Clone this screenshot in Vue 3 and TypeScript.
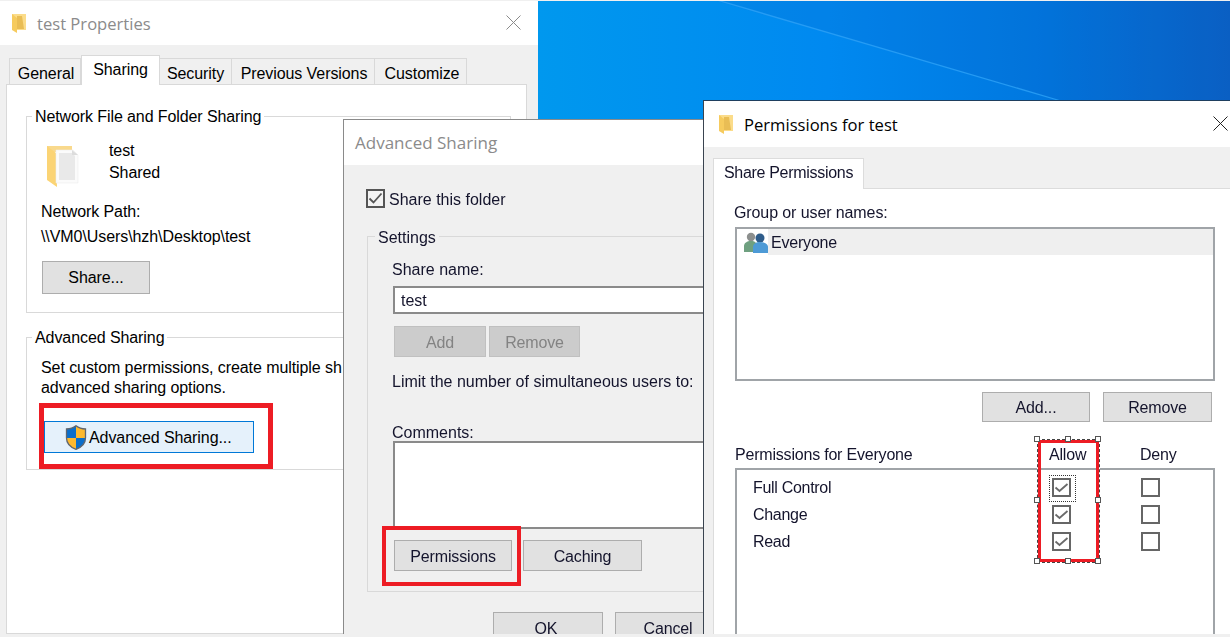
<script setup lang="ts">
interface PermRow { name: string; allow: boolean; focus: boolean }
const rows: PermRow[] = [
  { name: 'Full Control', allow: true, focus: true },
  { name: 'Change', allow: true, focus: false },
  { name: 'Read', allow: true, focus: false },
]
const tabs: string[] = ['General', 'Sharing', 'Security', 'Previous Versions', 'Customize']
const handles: { left: string; top: string }[] = [
  { left: '0%', top: '0%' }, { left: '50%', top: '0%' }, { left: '100%', top: '0%' },
  { left: '0%', top: '50%' }, { left: '100%', top: '50%' },
  { left: '0%', top: '100%' }, { left: '50%', top: '100%' }, { left: '100%', top: '100%' },
]
</script>

<template>
  <div class="screen">
    <svg class="wallpaper" viewBox="0 0 692 118" preserveAspectRatio="none">
      <defs>
        <linearGradient id="wall" x1="0" y1="0" x2="1" y2="0">
          <stop offset="0" stop-color="#0098ee" />
          <stop offset="0.42" stop-color="#0089f0" />
          <stop offset="0.72" stop-color="#0078e0" />
          <stop offset="1" stop-color="#0a60c4" />
        </linearGradient>
      </defs>
      <rect width="692" height="118" fill="url(#wall)" />
      <polygon points="179,0 523,100 692,100 692,0" fill="#0a5cc0" opacity="0.16" />
      <line x1="179" y1="-1" x2="523" y2="100" stroke="#2ea3f8" stroke-width="1.3" opacity="0.8" />
    </svg>

    <section class="win props">
      <header class="title">
        <svg class="mini" viewBox="0 0 14 19">
          <rect x="0" y="0" width="14" height="16" fill="#fbdc8a" />
          <polygon points="0,0 5,4 5,19 0,16" fill="#f6cb5e" />
          <polygon points="5,2 10,2 12,15 5,15" fill="#e9bd55" />
        </svg>
        <span class="title-text dim">test Properties</span>
        <svg class="close" viewBox="0 0 15 15"><path d="M0.5 0.5 14.5 14.5M14.5 0.5 0.5 14.5" stroke="#8a8a8a" fill="none" /></svg>
      </header>
      <nav class="tabs">
        <span v-for="t in tabs" :key="t" class="tab" :class="['tab-' + t.split(' ')[0], { active: t === 'Sharing' }]">{{ t }}</span>
      </nav>
      <div class="panel">
        <div class="group g1">
          <span class="legend">Network File and Folder Sharing</span>
          <div class="share-row">
            <svg class="big-folder" viewBox="0 0 36 44">
              <polygon points="1,2 26,2 26,8 1,8" fill="#f9d98c" />
              <polygon points="1,2 10,9 11,43 1,36" fill="#fbd475" />
              <polygon points="10,6 27,6 32,11 32,39 10,39" fill="#fbfbfb" stroke="#ececec" stroke-width="0.6" />
              <polygon points="13,9 26,9 29,12 29,36 13,36" fill="#e9e9e9" />
              <polygon points="26,6 32,11 26,11" fill="#dcdcdc" />
            </svg>
            <div class="share-text"><div>test</div><div>Shared</div></div>
          </div>
          <div class="net-label">Network Path:</div>
          <div class="net-path">\\VM0\Users\hzh\Desktop\test</div>
          <button class="btn share-btn">Share...</button>
        </div>
        <div class="group g2">
          <span class="legend">Advanced Sharing</span>
          <div class="adv-text">Set custom permissions, create multiple sh</div>
          <div class="adv-text">advanced sharing options.</div>
          <button class="btn adv-btn">
            <svg class="shield" viewBox="0 0 22 25">
              <defs><clipPath id="sh"><path d="M11 .8C8.5 2.8 4.8 4 1.5 4v9c0 5.8 4.3 9.400 9.500 11.300 5.200-1.900 9.500-5.500 9.500-11.300V4C17.200 4 13.500 2.800 11 .8z" /></clipPath></defs>
              <g clip-path="url(#sh)">
                <rect x="0" y="0" width="11" height="13" fill="#0a6ecb" />
                <rect x="11" y="0" width="11" height="13" fill="#fdb92e" />
                <rect x="0" y="13" width="11" height="12" fill="#fdb92e" />
                <rect x="11" y="13" width="11" height="12" fill="#0a6ecb" />
              </g>
              <path d="M11 .8C8.500 2.800 4.800 4 1.500 4v9c0 5.800 4.300 9.400 9.500 11.300 5.200-1.900 9.500-5.500 9.500-11.300V4C17.200 4 13.500 2.800 11 .8z" fill="none" stroke="#5f6670" stroke-width="1.300" />
            </svg>
            <span class="adv-label">Advanced Sharing...</span>
          </button>
        </div>
      </div>
      <div class="red red-adv"></div>
    </section>

    <section class="win adv">
      <header class="title short"><span class="title-text dim big">Advanced Sharing</span></header>
      <div class="soft adv-body">
        <label class="check-row">
          <span class="cb dark"><svg viewBox="0 0 19 19"><path d="M3.500 9.500l4 4 8-9" fill="none" stroke="#555" stroke-width="1.800" /></svg></span>
          <span class="check-label">Share this folder</span>
        </label>
        <div class="group settings">
          <span class="legend gray">Settings</span>
          <div class="line s-name">Share name:</div>
          <div class="input">test</div>
          <div class="btn-row small">
            <button class="btn off w92">Add</button>
            <button class="btn off w91">Remove</button>
          </div>
          <div class="line s-limit">Limit the number of simultaneous users to:</div>
          <div class="line s-comments">Comments:</div>
          <div class="textarea"></div>
          <div class="btn-row wide">
            <button class="btn w118">Permissions</button>
            <button class="btn w119">Caching</button>
          </div>
        </div>
        <div class="btn-row footer">
          <button class="btn w110">OK</button>
          <button class="btn w110">Cancel</button>
        </div>
      </div>
      <div class="red red-perm"></div>
    </section>

    <section class="win perm">
      <header class="title perm-title">
        <svg class="mini" viewBox="0 0 14 19">
          <rect x="0" y="0" width="14" height="16" fill="#fbdc8a" />
          <polygon points="0,0 5,4 5,19 0,16" fill="#f6cb5e" />
          <polygon points="5,2 10,2 12,15 5,15" fill="#e9bd55" />
        </svg>
        <span class="title-text">Permissions for test</span>
        <svg class="close" viewBox="0 0 15 15"><path d="M0.5 0.5 14.5 14.5M14.5 0.5 0.5 14.5" stroke="#222" fill="none" /></svg>
      </header>
      <div class="soft">
        <div class="perm-tabs"><span class="perm-tab">Share Permissions</span></div>
        <div class="perm-panel">
          <div class="line p-group">Group or user names:</div>
          <div class="listbox">
            <div class="list-row">
              <span class="list-icon">
                <svg viewBox="0 0 24 21" width="24" height="21">
                  <circle cx="7" cy="5" r="4.200" fill="#8c8f8e" />
                  <path d="M0 20V14c0-3 3-5 7-5s6 2 6 5v6z" fill="#6fa080" />
                  <circle cx="16" cy="6" r="4.500" fill="#2e5c8a" />
                  <path d="M9 21v-6c0-3 3-5 7-5s8 2 8 5v6z" fill="#4d9ad6" />
                </svg>
              </span>
              <span class="list-name">Everyone</span>
            </div>
          </div>
          <div class="btn-row list-btns">
            <button class="btn w108">Add...</button>
            <button class="btn w109">Remove</button>
          </div>
          <div class="perm-head">
            <span class="ph-name">Permissions for Everyone</span>
            <span class="ph-allow">Allow</span>
            <span>Deny</span>
          </div>
          <div class="perm-box">
            <div v-for="r in rows" :key="r.name" class="perm-row">
              <span class="perm-name">{{ r.name }}</span>
              <span class="cb" :class="{ focus: r.focus }">
                <svg v-if="r.allow" viewBox="0 0 19 19"><path d="M3.500 9.500l4 3.500 8-7" fill="none" stroke="#6a6a6a" stroke-width="1.800" /></svg>
              </span>
              <span class="cb"></span>
            </div>
          </div>
        </div>
      </div>
      <div class="selection">
        <div class="sel-red"></div>
        <i v-for="(h, i) in handles" :key="i" class="handle" :style="{ left: h.left, top: h.top }"></i>
      </div>
    </section>
  </div>
</template>

<style>
html, body { margin: 0; background: #f0f0f0; }
</style>

<style scoped>
.screen {
  position: relative;
  width: 1230px;
  height: 637px;
  overflow: hidden;
  background: #f0f0f0;
  font-family: "Liberation Sans", Arial, sans-serif;
  font-size: 16px;
  color: #000;
}
.wallpaper { position: absolute; left: 538px; top: 1px; width: 692px; height: 118px; display: block; }
.win { position: absolute; overflow: hidden; background: #f0f0f0; box-sizing: border-box; }
.props { left: 0; top: 1px; width: 538px; height: 633px; letter-spacing: -0.08px; }
.adv { left: 343px; top: 119px; width: 361px; height: 515px; border-left: 1px solid #8a8a8a; border-top: 1px solid #8a8a8a; }
.perm { left: 703px; top: 100px; width: 527px; height: 534px; border-left: 1px solid #3a4450; border-top: 1px solid #1f3f5f; }

.title { display: flex; align-items: center; height: 44px; background: #fff; padding-left: 12px; position: relative; }
.title.short { height: 45px; padding-left: 11px; }
.perm-title { height: 46px; padding-left: 15px; }
.mini { width: 14px; height: 19px; flex: none; margin-right: 11px; }
.title-text { font-family: "Open Sans", sans-serif; font-size: 16.6px; letter-spacing: 0; }
.title-text.big { font-size: 17px; }
.dim { color: #8b8b8b; }
.close { position: absolute; right: 17px; top: 14px; width: 15px; height: 15px; }
.perm-title .close { right: 2px; top: 15px; }

.tabs { display: flex; align-items: flex-end; height: 29px; margin-top: 10px; padding-left: 9px; color: #000; }
.tab { box-sizing: border-box; height: 26px; border: 1px solid #d9d9d9; border-bottom: none; border-left-width: 0; line-height: 30px; text-align: center; background: #f0f0f0; white-space: nowrap; }
.tab-General { width: 72px; border-left-width: 1px; padding-left: 2px; }
.tab-Sharing { width: 79px; }
.tab-Security { width: 72px; }
.tab-Previous { width: 143px; padding-left: 2px; }
.tab-Customize { width: 92px; padding-left: 3px; }
.tab.active { height: 30px; background: #fff; line-height: 28px; margin-bottom: -1px; position: relative; z-index: 1; border-left-width: 1px; }

.panel { box-sizing: border-box; margin: 0 11px 0 6px; height: 550px; background: #fff; border: 1px solid #d9d9d9; padding: 31px 0 0 19px; }
.group { box-sizing: border-box; border: 1px solid #d9d9d9; }
.g1 { width: 485px; height: 197px; }
.g2 { width: 485px; height: 133px; margin-top: 24px; }
.legend { display: block; width: fit-content; margin: -10px 0 0 5px; padding: 0 3px; background: #fff; line-height: 20px; white-space: nowrap; }
.g1 .legend { letter-spacing: -0.1px; }
.legend.gray { background: #f0f0f0; margin: -9px 0 -1px 7px; }
.share-row { display: flex; margin-top: 12px; }
.big-folder { width: 36px; height: 44px; margin: 5px 0 0 19px; flex: none; }
.share-text { margin-left: 27px; padding-top: 1px; line-height: 22px; }
.net-label { margin: 13px 0 0 14px; line-height: 22px; }
.net-path { margin: 3px 0 0 14px; line-height: 22px; }
.btn { box-sizing: border-box; display: flex; align-items: center; justify-content: center; padding: 0; background: #e1e1e1; border: 1.500px solid #adadad; font: inherit; color: inherit; letter-spacing: inherit; }
.soft .btn { padding-top: 2px; letter-spacing: -0.15px; }
.share-btn { width: 108px; height: 33px; margin: 13px 0 0 15px; }
.adv-text { margin-left: 14px; line-height: 20px; white-space: nowrap; }
.legend + .adv-text { margin-top: 10px; }
.adv-btn { width: 210px; height: 32px; margin: 23px 0 0 17px; background: #e5f1fb; border: 1px solid #0078d7; justify-content: flex-start; padding-left: 20px; }
.adv-label { margin-top: 2px; }
.shield { width: 22px; height: 25px; margin-right: 2px; flex: none; }
.red { position: absolute; box-sizing: border-box; border: 5px solid #ed1c24; }
.red-adv { left: 39px; top: 402px; width: 234px; height: 66px; }
.red-perm { left: 38px; top: 406px; width: 139px; height: 60px; border-width: 4px; }

.soft { filter: blur(0.3px); color: #14142c; }
.adv-body { padding: 24px 0 0 22px; }
.check-row { display: flex; align-items: center; gap: 4px; height: 19px; }
.check-label { margin-top: 2px; }
.cb { box-sizing: border-box; display: block; width: 19px; height: 19px; background: #fff; border: 2px solid #666; position: relative; }
.cb svg { position: absolute; left: -2px; top: -2px; width: 19px; height: 19px; }
.cb.dark { border-color: #555; background: #f3f3f3; }
.settings { width: 399px; height: 356px; margin: 28px 0 0 1px; }
.line { line-height: 20px; white-space: nowrap; }
.s-name { margin: 13px 0 0 24px; }
.input { box-sizing: border-box; width: 380px; height: 28px; margin: 6px 0 0 25px; background: #fff; border: 2px solid #8a8a8a; padding-left: 6px; line-height: 26px; }
.btn-row { display: flex; }
.small { margin: 12px 0 0 26px; gap: 3px; }
.off { background: #ccc; border-color: #c0c0c0; color: #838383; }
.w92 { width: 92px; height: 31px; }
.w91 { width: 91px; height: 31px; }
.s-limit { margin: 15px 0 0 24px; }
.s-comments { margin: 31px 0 0 24px; }
.textarea { box-sizing: border-box; width: 380px; height: 88px; margin: -2px 0 0 25px; background: #fff; border: 2px solid #8a8a8a; }
.wide { margin: 11px 0 0 26px; gap: 11px; }
.w118 { width: 118px; height: 31px; }
.w119 { width: 119px; height: 31px; }
.footer { margin: 20px 0 0 127px; gap: 12px; }
.soft .w110 { width: 110px; height: 33px; flex: none; padding: 0 4px 0 0; }

.perm-tabs { height: 41px; padding: 11px 0 0 9px; box-sizing: border-box; }
.perm-tab { display: block; box-sizing: border-box; width: 151px; height: 31px; background: #fff; border: 1px solid #dcdcdc; border-bottom: none; text-align: center; line-height: 28px; position: relative; z-index: 1; letter-spacing: -0.3px; }
.perm-panel { box-sizing: border-box; margin-left: 9px; height: 446px; background: #fff; border-top: 1px solid #dcdcdc; border-left: 1px solid #dcdcdc; padding-left: 20px; }
.p-group { margin-top: 14px; letter-spacing: -0.1px; }
.listbox { box-sizing: border-box; width: 480px; height: 154px; margin-top: 4px; margin-left: 1px; border: 2px solid #a0a4a8; }
.list-row { display: flex; height: 26px; }
.list-icon { box-sizing: border-box; width: 31px; padding: 3px 0 0 7px; flex: none; }
.list-name { flex: 1; background: #efefef; padding-left: 3px; line-height: 27px; letter-spacing: -0.2px; margin-right: 0; }
.list-btns { margin: 11px 0 0 248px; gap: 13px; }
.w108 { width: 108px; height: 30px; }
.w109 { width: 109px; height: 30px; }
.perm-head { display: flex; margin: 23px 0 0 1px; line-height: 20px; white-space: nowrap; letter-spacing: -0.2px; }
.ph-name { width: 314px; flex: none; }
.ph-allow { width: 91px; flex: none; }
.perm-box { box-sizing: border-box; width: 480px; height: 190px; margin: 3px 0 0 1px; border: 2px solid #a0a4a8; padding-top: 4px; }
.perm-row { display: grid; grid-template-columns: 299px 89px 19px; align-items: center; height: 27px; padding-left: 16px; }
.perm-name { letter-spacing: -0.3px; }
.cb.focus::after { content: ""; position: absolute; left: -5px; top: -5px; width: 25px; height: 25px; border: 1px dotted #333; }

.selection { position: absolute; left: 333px; top: 338px; width: 61px; height: 122px; border: 1px solid #fff; box-sizing: content-box; }
.selection::before { content: ""; position: absolute; inset: -1px; border: 1px dashed #444; }
.sel-red { position: absolute; inset: 0; border: 3px solid #ed1c24; }
.handle { position: absolute; width: 4px; height: 4px; margin: -4px 0 0 -4px; background: #fff; border: 1px solid #555; box-sizing: content-box; }
</style>
